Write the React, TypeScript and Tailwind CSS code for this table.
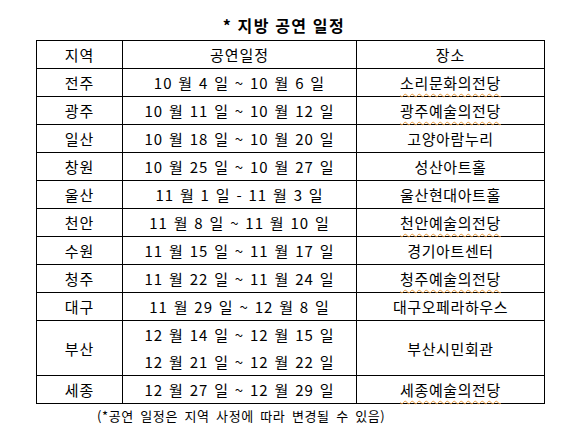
import React from "react";

type Row = { region: string; dates: string[]; venue: string; mark?: boolean };

const rows: Row[] = [
  { region: "전주", dates: ["10 월 4 일 ~ 10 월 6 일"], venue: "소리문화의전당", mark: true },
  { region: "광주", dates: ["10 월 11 일 ~ 10 월 12 일"], venue: "광주예술의전당", mark: true },
  { region: "일산", dates: ["10 월 18 일 ~ 10 월 20 일"], venue: "고양아람누리" },
  { region: "창원", dates: ["10 월 25 일 ~ 10 월 27 일"], venue: "성산아트홀" },
  { region: "울산", dates: ["11 월 1 일 - 11 월 3 일"], venue: "울산현대아트홀" },
  { region: "천안", dates: ["11 월 8 일 ~ 11 월 10 일"], venue: "천안예술의전당", mark: true },
  { region: "수원", dates: ["11 월 15 일 ~ 11 월 17 일"], venue: "경기아트센터" },
  { region: "청주", dates: ["11 월 22 일 ~ 11 월 24 일"], venue: "청주예술의전당", mark: true },
  { region: "대구", dates: ["11 월 29 일 ~ 12 월 8 일"], venue: "대구오페라하우스" },
  { region: "부산", dates: ["12 월 14 일 ~ 12 월 15 일", "12 월 21 일 ~ 12 월 22 일"], venue: "부산시민회관" },
  { region: "세종", dates: ["12 월 27 일 ~ 12 월 29 일"], venue: "세종예술의전당", mark: true },
];

export default function App() {
  return (
    <div
      className="w-[566px] h-[425px] bg-white text-black"
      style={{ fontFamily: '"Noto Sans CJK KR", "Noto Sans", sans-serif' }}
    >
      <div className="h-[40px] flex items-end justify-center pb-[7px] pl-[2px]">
        <span className="text-[16px] font-bold tracking-[1.5px] leading-none">* 지방 공연 일정</span>
      </div>
      <div className="ml-[36px] w-[508px]">
        <table className="border-collapse w-full table-fixed text-[15px] leading-none">
          <colgroup>
            <col className="w-[86px]" />
            <col className="w-[234px]" />
            <col className="w-[188px]" />
          </colgroup>
          <thead>
            <tr className="h-[28px]">
              <td className="border border-black text-center tracking-[1px]">지역</td>
              <td className="border border-black text-center tracking-[1px]">공연일정</td>
              <td className="border border-black text-center tracking-[1px]">장소</td>
            </tr>
          </thead>
          <tbody>
            {rows.map((r) => (
              <tr key={r.region} className={r.dates.length > 1 ? "h-[55px]" : "h-[27.6px]"}>
                <td className="border border-black text-center tracking-[1px]">{r.region}</td>
                <td className="border border-black text-center">
                  {r.dates.map((d) => (
                    <div
                      key={d}
                      className="h-[27px] flex items-center justify-center tracking-[1px] [word-spacing:1.5px] whitespace-pre"
                    >
                      {d}
                    </div>
                  ))}
                </td>
                <td className="border border-black text-center tracking-[0.6px]">
                  <span
                    className={
                      r.mark
                        ? "underline decoration-wavy decoration-[#e89a3c] decoration-1 underline-offset-[4px]"
                        : ""
                    }
                  >
                    {r.venue}
                  </span>
                </td>
              </tr>
            ))}
          </tbody>
        </table>
        <div className="pl-[61px] pt-[5px] text-[13px] leading-none tracking-[0.6px] [word-spacing:3px]">
          (*공연 일정은 지역 사정에 따라 변경될 수 있음)
        </div>
      </div>
    </div>
  );
}
